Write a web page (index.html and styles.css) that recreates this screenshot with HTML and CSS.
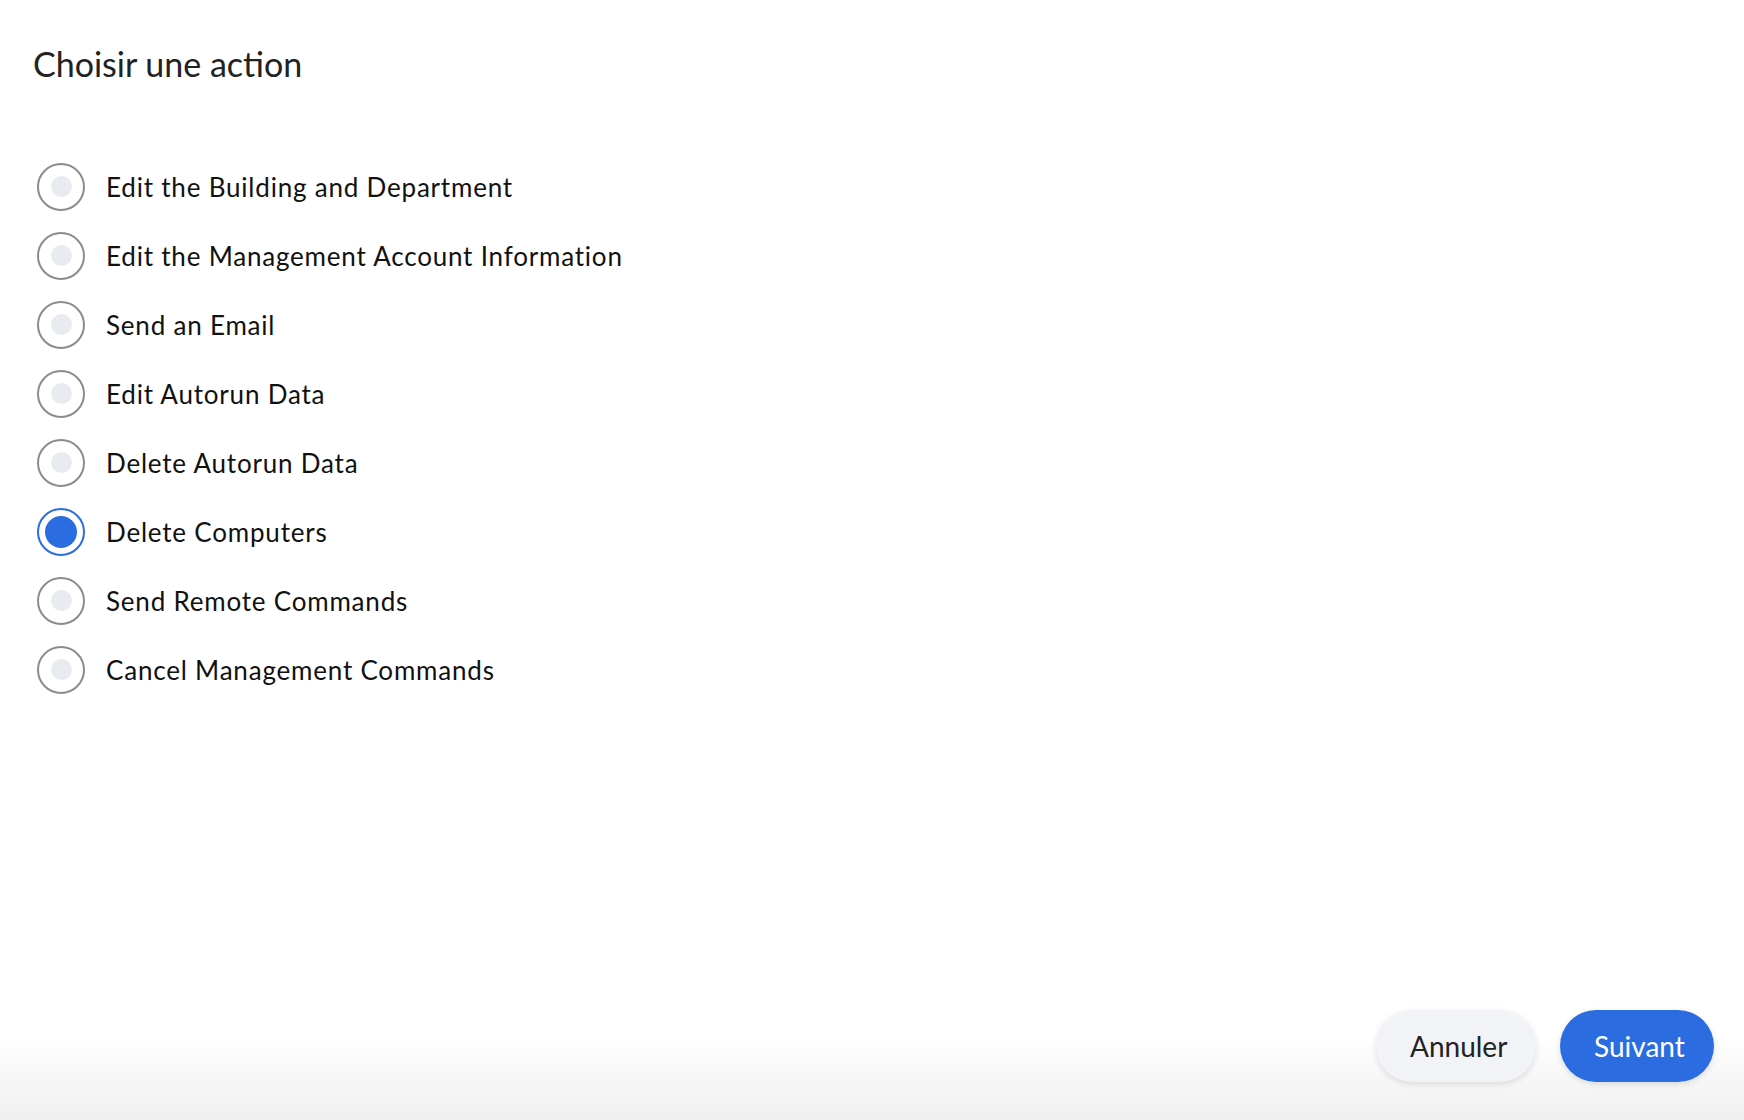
FILE: index.html
```html
<!DOCTYPE html>
<html lang="fr">
<head>
<meta charset="utf-8">
<title>Choisir une action</title>
<link rel="stylesheet" href="styles.css">
</head>
<body>
<div class="page">
  <main class="content">
    <h1 class="title">Choisir une action</h1>
    <ul class="options">
      <li class="option"><span class="radio"></span><span class="label">Edit the Building and Department</span></li>
      <li class="option"><span class="radio"></span><span class="label">Edit the Management Account Information</span></li>
      <li class="option"><span class="radio"></span><span class="label">Send an Email</span></li>
      <li class="option"><span class="radio"></span><span class="label">Edit Autorun Data</span></li>
      <li class="option"><span class="radio"></span><span class="label">Delete Autorun Data</span></li>
      <li class="option"><span class="radio checked"></span><span class="label">Delete Computers</span></li>
      <li class="option"><span class="radio"></span><span class="label">Send Remote Commands</span></li>
      <li class="option"><span class="radio"></span><span class="label">Cancel Management Commands</span></li>
    </ul>
  </main>
  <footer class="footer">
    <button class="btn btn-secondary">Annuler</button>
    <button class="btn btn-primary">Suivant</button>
  </footer>
</div>
</body>
</html>
```
FILE: styles.css
```css
* { box-sizing: border-box; }
html, body { margin: 0; padding: 0; background: #fff; }
body { font-family: Lato, "Open Sans", sans-serif; color: #111; }
.page {
  height: 1120px;
  display: flex;
  flex-direction: column;
}
.content {
  flex: 1;
  padding: 40px 0 0 33px;
}
.title {
  margin: 0;
  font-size: 34px;
  font-weight: 400;
  color: #222;
  line-height: 48px;
}
.options {
  list-style: none;
  margin: 64px 0 0 4px;
  padding: 0;
}
.option {
  display: flex;
  align-items: center;
  height: 69px;
}
.radio {
  width: 48px;
  height: 48px;
  border-radius: 50%;
  border: 2px solid #8c8c8c;
  display: flex;
  align-items: center;
  justify-content: center;
  flex: none;
}
.radio::after {
  content: "";
  width: 21px;
  height: 21px;
  border-radius: 50%;
  background: #e8ebf0;
}
.radio.checked { border-color: #2b6de0; }
.radio.checked::after {
  width: 32px;
  height: 32px;
  background: #2b6de0;
}
.label {
  margin-left: 21px;
  font-size: 26px;
  letter-spacing: 0.8px;
  color: #111;
}
.footer {
  display: flex;
  justify-content: flex-end;
  gap: 24px;
  padding: 0 30px 38px 0;
  background: linear-gradient(to bottom, #ffffff 0%, #ffffff 40%, #efefef 100%);
  height: 140px;
  align-items: flex-end;
}
.btn {
  height: 72px;
  border: none;
  border-radius: 36px;
  font-family: Lato, "Open Sans", sans-serif;
  font-size: 28px;
  padding: 0 34px;
  cursor: pointer;
}
.btn-secondary {
  width: 160px;
  background: #f2f3f7;
  color: #222;
  box-shadow: 0 2px 6px rgba(0,0,0,0.12);
}
.btn-primary {
  width: 154px;
  background: #2b6de0;
  color: #fff;
  box-shadow: 0 2px 6px rgba(0,0,0,0.12);
}
```
